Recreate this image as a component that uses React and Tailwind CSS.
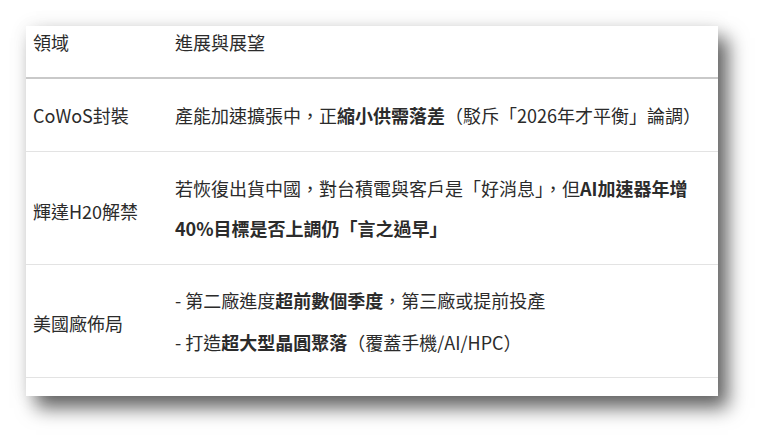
import React from "react";

const rows = [
  {
    field: "CoWoS封裝",
    height: "h-[73px]",
    leading: "leading-[40px]",
    pad: "pt-0",
    lines: [
      [
        ["產能加速擴張中，正", false],
        ["縮小供需落差", true],
        ["（駁斥「2026年才平衡」論調）", false],
      ],
    ],
  },
  {
    field: "輝達H20解禁",
    height: "h-[113px]",
    leading: "leading-[40px]",
    pad: "pt-[6px]",
    lines: [
      [
        ["若恢復出貨中國，對台積電與客戶是「好消息」，但", false],
        ["AI加速器年增", true],
      ],
      [["40%目標是否上調仍「言之過早」", true]],
    ],
  },
  {
    field: "美國廠佈局",
    height: "h-[113px]",
    leading: "leading-[42px]",
    pad: "pt-[4px]",
    lines: [
      [
        ["- 第二廠進度", false],
        ["超前數個季度", true],
        ["，第三廠或提前投產", false],
      ],
      [
        ["- 打造", false],
        ["超大型晶圓聚落", true],
        ["（覆蓋手機/AI/HPC）", false],
      ],
    ],
  },
];

export default function App() {
  return (
    <div
      className="w-[770px] h-[448px] bg-white pt-[26px] pl-[26px]"
      style={{ fontFamily: '"Noto Sans CJK TC", "Noto Sans", sans-serif' }}
    >
      <div className="w-[692px] h-[370px] bg-white text-[#2b2b2b] text-[18px] shadow-[0_0_18px_rgba(0,0,0,0.08),10px_12px_18px_rgba(0,0,0,0.6)]">
        <div className="flex h-[53px] pt-[3px] px-[7px] leading-[26px] border-b-2 border-[#c9c9c9]">
          <div className="w-[142px]">領域</div>
          <div>進展與展望</div>
        </div>
        {rows.map((row) => (
          <div
            key={row.field}
            className={`flex items-center px-[7px] border-b border-[#e3e3e3] ${row.height}`}
          >
            <div className={`w-[142px] shrink-0 ${row.pad}`}>{row.field}</div>
            <div className={row.leading}>
              {row.lines.map((line, i) => (
                <div key={i} className="whitespace-nowrap">
                  {line.map(([text, bold], j) => (
                    <span key={j} className={bold ? "font-bold" : ""}>
                      {text}
                    </span>
                  ))}
                </div>
              ))}
            </div>
          </div>
        ))}
      </div>
    </div>
  );
}
